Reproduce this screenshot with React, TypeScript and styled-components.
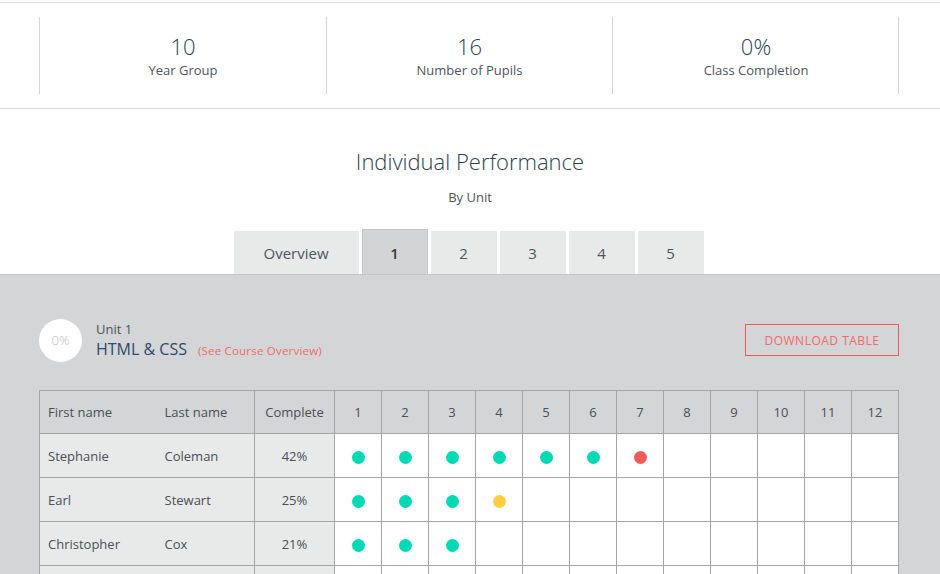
import React from "react";
import styled, { createGlobalStyle } from "styled-components";

const GlobalStyle = createGlobalStyle`
  html, body { margin: 0; padding: 0; background: #ffffff; }
  body {
    font-family: "Open Sans", "Noto Sans", "Liberation Sans", sans-serif;
    color: #4a4f57;
    -webkit-font-smoothing: antialiased;
  }
  * { box-sizing: border-box; }
`;

const Page = styled.div`
  width: 940px;
  padding-top: 2px;
`;

const StatsBar = styled.section`
  border-top: 1px solid #dcdcdc;
  border-bottom: 1px solid #dcdcdc;
  padding: 14px 0;
`;

const Container = styled.div`
  width: 860px;
  margin-left: 39px;
`;

const StatsGrid = styled.div`
  display: grid;
  grid-template-columns: 287px 286px 287px;
  border-right: 1px solid #d6d6d6;
`;

const Stat = styled.div`
  height: 77px;
  border-left: 1px solid #d6d6d6;
  display: flex;
  flex-direction: column;
  align-items: center;
  padding-top: 16px;
`;

const StatValue = styled.div`
  font-size: 22px;
  line-height: 26px;
  font-weight: 300;
  color: #2c3e50;
`;

const StatLabel = styled.div`
  font-size: 13px;
  line-height: 20px;
  color: #4f545c;
  margin-top: 1px;
`;

const Heading = styled.header`
  text-align: center;
  padding-top: 37px;
`;

const Title = styled.h1`
  margin: 0;
  font-size: 22px;
  line-height: 30px;
  font-weight: 300;
  color: #2c3e50;
`;

const Subtitle = styled.div`
  margin-top: 11px;
  font-size: 13px;
  line-height: 20px;
  color: #4f545c;
`;

const Tabs = styled.nav`
  display: flex;
  justify-content: center;
  align-items: flex-end;
  gap: 3px;
  margin-top: 22px;
  padding-right: 3px;
`;

const Tab = styled.div<{ $active?: boolean; $wide?: boolean }>`
  width: ${(p) => (p.$wide ? "125px" : "66px")};
  height: ${(p) => (p.$active ? "45px" : "43px")};
  display: flex;
  align-items: center;
  justify-content: center;
  font-size: 15px;
  font-weight: ${(p) => (p.$active ? 600 : 400)};
  color: ${(p) => (p.$active ? "#333840" : "#4f545c")};
  background: ${(p) => (p.$active ? "#d3d4d6" : "#e8e9e9")};
  border: ${(p) => (p.$active ? "1px solid #c6c7c9" : "none")};
  border-bottom: none;
  padding-top: ${(p) => (p.$active ? "2px" : "0")};
`;

const Panel = styled.section`
  background: #d4d5d7;
  border-top: 1px solid #c4c5c7;
  padding-top: 43px;
  padding-bottom: 40px;
`;

const UnitHeader = styled.div`
  display: flex;
  align-items: center;
  justify-content: space-between;
`;

const UnitInfo = styled.div`
  display: flex;
  align-items: center;
  gap: 14px;
`;

const Progress = styled.div`
  width: 43px;
  height: 43px;
  border-radius: 50%;
  background: #ffffff;
  display: flex;
  align-items: center;
  justify-content: center;
  font-size: 13px;
  font-weight: 300;
  color: #b9bcc0;
`;

const UnitText = styled.div`
  display: flex;
  flex-direction: column;
  margin-top: 2px;
`;

const UnitLabel = styled.div`
  font-size: 13px;
  line-height: 18px;
  color: #4f545c;
`;

const UnitName = styled.div`
  display: flex;
  align-items: baseline;
  gap: 11px;
  font-size: 16px;
  line-height: 22px;
  color: #2c4a6b;
`;

const CourseLink = styled.a`
  font-size: 11.5px;
  color: #f06a6c;
  text-decoration: none;
  letter-spacing: 0.2px;
`;

const DownloadButton = styled.button`
  width: 154px;
  height: 32px;
  border: 1px solid #f05a5a;
  background: transparent;
  color: #f06a6a;
  font-family: inherit;
  font-size: 12px;
  letter-spacing: 0.5px;
  text-transform: uppercase;
  margin-top: -1px;
  padding: 1px 0 0;
`;

const Table = styled.table`
  margin-top: 28px;
  width: 859px;
  table-layout: fixed;
  border-collapse: collapse;
  font-size: 13px;
`;

const HeadCell = styled.th<{ $align?: string; $noLeft?: boolean; $noRight?: boolean }>`
  height: 43px;
  background: #d4d5d7;
  border: 1px solid #a5a5a5;
  ${(p) => (p.$noRight ? "border-right: none;" : "")}
  ${(p) => (p.$noLeft ? "border-left: none;" : "")}
  text-align: ${(p) => p.$align || "center"};
  padding: 0 8px;
  font-weight: 400;
  color: #4a4f57;
`;

const NameCell = styled.td<{ $align?: string; $noLeft?: boolean; $noRight?: boolean }>`
  height: 44px;
  background: #e8e9e9;
  border: 1px solid #a5a5a5;
  ${(p) => (p.$noRight ? "border-right: none;" : "")}
  ${(p) => (p.$noLeft ? "border-left: none;" : "")}
  text-align: ${(p) => p.$align || "left"};
  padding: 0 8px;
  color: #4a4f57;
`;

const ScoreCell = styled.td`
  height: 44px;
  background: #ffffff;
  border: 1px solid #a5a5a5;
  text-align: center;
  padding: 0;
`;

const Dot = styled.span<{ $color: string }>`
  display: inline-block;
  width: 13px;
  height: 13px;
  border-radius: 50%;
  background: ${(p) => p.$color};
  vertical-align: middle;
`;

const DOT_COLORS: Record<string, string> = {
  g: "#00d9b6",
  r: "#f25a5a",
  y: "#ffcf40",
};

const pupils = [
  { first: "Stephanie", last: "Coleman", complete: "42%", marks: "ggggggr" },
  { first: "Earl", last: "Stewart", complete: "25%", marks: "gggy" },
  { first: "Christopher", last: "Cox", complete: "21%", marks: "ggg" },
  { first: "Danielle", last: "Bailey", complete: "17%", marks: "gg" },
];

const units = Array.from({ length: 12 }, (_, i) => i + 1);

export default function App() {
  return (
    <Page>
      <GlobalStyle />
      <StatsBar>
        <Container>
          <StatsGrid>
            <Stat>
              <StatValue>10</StatValue>
              <StatLabel>Year Group</StatLabel>
            </Stat>
            <Stat>
              <StatValue>16</StatValue>
              <StatLabel>Number of Pupils</StatLabel>
            </Stat>
            <Stat>
              <StatValue>0%</StatValue>
              <StatLabel>Class Completion</StatLabel>
            </Stat>
          </StatsGrid>
        </Container>
      </StatsBar>

      <Heading>
        <Title>Individual Performance</Title>
        <Subtitle>By Unit</Subtitle>
      </Heading>

      <Tabs>
        <Tab $wide>Overview</Tab>
        <Tab $active>1</Tab>
        <Tab>2</Tab>
        <Tab>3</Tab>
        <Tab>4</Tab>
        <Tab>5</Tab>
      </Tabs>

      <Panel>
        <Container>
          <UnitHeader>
            <UnitInfo>
              <Progress>0%</Progress>
              <UnitText>
                <UnitLabel>Unit 1</UnitLabel>
                <UnitName>
                  HTML &amp; CSS
                  <CourseLink href="#">(See Course Overview)</CourseLink>
                </UnitName>
              </UnitText>
            </UnitInfo>
            <DownloadButton>Download Table</DownloadButton>
          </UnitHeader>

          <Table>
            <colgroup>
              <col style={{ width: 117 }} />
              <col style={{ width: 98 }} />
              <col style={{ width: 80 }} />
              {units.map((u) => (
                <col key={u} style={{ width: 47 }} />
              ))}
            </colgroup>
            <thead>
              <tr>
                <HeadCell $align="left" $noRight>First name</HeadCell>
                <HeadCell $align="left" $noLeft>Last name</HeadCell>
                <HeadCell>Complete</HeadCell>
                {units.map((u) => (
                  <HeadCell key={u}>{u}</HeadCell>
                ))}
              </tr>
            </thead>
            <tbody>
              {pupils.map((p) => (
                <tr key={p.first}>
                  <NameCell $noRight>{p.first}</NameCell>
                  <NameCell $noLeft>{p.last}</NameCell>
                  <NameCell $align="center">{p.complete}</NameCell>
                  {units.map((u, i) => (
                    <ScoreCell key={u}>
                      {p.marks[i] ? <Dot $color={DOT_COLORS[p.marks[i]]} /> : null}
                    </ScoreCell>
                  ))}
                </tr>
              ))}
            </tbody>
          </Table>
        </Container>
      </Panel>
    </Page>
  );
}
